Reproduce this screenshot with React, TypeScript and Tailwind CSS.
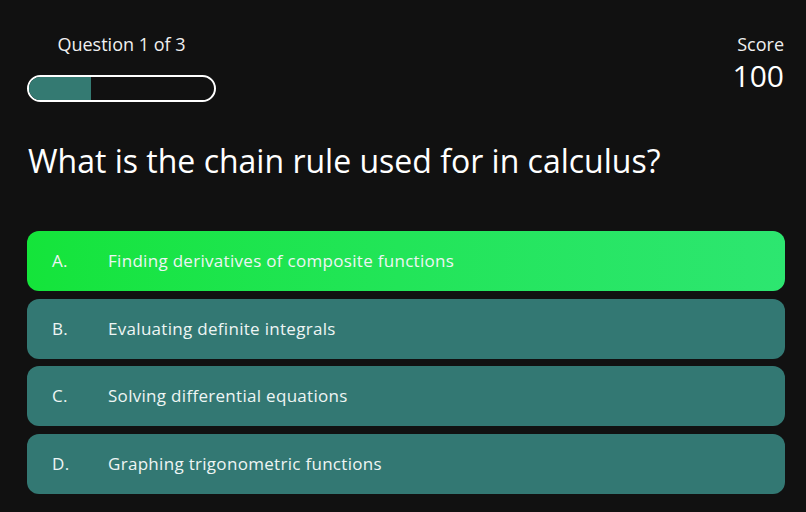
const options = [
  { letter: "A.", text: "Finding derivatives of composite functions", correct: true },
  { letter: "B.", text: "Evaluating definite integrals", correct: false },
  { letter: "C.", text: "Solving differential equations", correct: false },
  { letter: "D.", text: "Graphing trigonometric functions", correct: false },
];

const App = () => {
  const current = 1;
  const total = 3;

  return (
    <div className="w-screen h-screen bg-[#111111] text-white font-['Open_Sans',sans-serif] pl-[27px] pr-[21px] pt-[31px] overflow-hidden">
      <div className="flex items-start justify-between">
        <div className="flex flex-col items-center w-[189px]">
          <p className="text-[18px] leading-[26px] text-[#f0f0f0]">
            Question {current} of {total}
          </p>
          <div className="mt-[18px] w-full h-[27px] rounded-full border-2 border-white overflow-hidden">
            <div
              className="h-full bg-[#347a72]"
              style={{ width: `${(current / total) * 100}%` }}
            />
          </div>
        </div>
        <div className="flex flex-col items-end pr-[1px]">
          <p className="text-[18px] leading-[26px] text-[#f0f0f0]">Score</p>
          <p className="text-[30px] leading-[36px] mt-[1px]">100</p>
        </div>
      </div>

      <h1 className="mt-[37px] text-[32px] leading-[44px] pl-[1px]">
        What is the chain rule used for in calculus?
      </h1>

      <div className="mt-[48px] flex flex-col gap-[7.5px]">
        {options.map((o) => (
          <button
            key={o.letter}
            className={
              o.correct
                ? "h-[60px] rounded-xl flex items-center px-[25px] text-left bg-gradient-to-r from-[#14e43a] to-[#2de670]"
                : "h-[60px] rounded-xl flex items-center px-[25px] text-left bg-[#337873]"
            }
          >
            <span className="w-[56px] text-[17px] tracking-[0.3px] text-[#eef5f4]">{o.letter}</span>
            <span className="text-[17px] tracking-[0.3px] text-[#eef5f4]">{o.text}</span>
          </button>
        ))}
      </div>
    </div>
  );
};

export default App;
